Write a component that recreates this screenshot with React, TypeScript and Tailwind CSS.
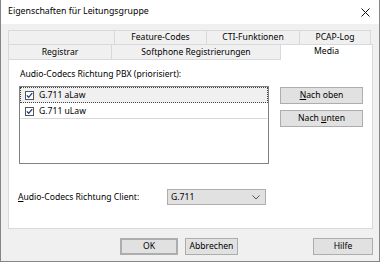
import React from "react";

const font = { fontFamily: '"Segoe UI", "Noto Sans", sans-serif' };

const topTabs = [
  { label: "", w: "w-[106px]" },
  { label: "Feature-Codes", w: "w-[92px]" },
  { label: "CTI-Funktionen", w: "w-[93px]" },
  { label: "PCAP-Log", w: "w-[72px]" },
];

const codecs = ["G.711 aLaw", "G.711 uLaw"];

const Check = () => (
  <span className="flex items-center justify-center w-[9px] h-[9px] border border-[#555] bg-white">
    <svg width="7" height="7" viewBox="0 0 7 7">
      <path d="M0.8 3.4 L2.7 5.3 L6.2 1.2" fill="none" stroke="#1a3a8a" strokeWidth="1.3" />
    </svg>
  </span>
);

const Btn = ({ children, className = "" }: { children: React.ReactNode; className?: string }) => (
  <button className={`h-[17px] flex items-center justify-center bg-[#e1e1e1] border border-[#adadad] text-[8.6px] leading-none text-black ${className}`}>
    {children}
  </button>
);

export default function App() {
  return (
    <div className="w-[380px] h-[262px] bg-[#f0f0f0] border-x border-b border-[#858585] text-black text-[8.6px] overflow-hidden" style={font}>
      {/* title bar */}
      <div className="h-[24px] bg-white flex items-center justify-between pl-[7px] pr-[9px]">
        <span className="text-[8.8px]">Eigenschaften für Leitungsgruppe</span>
        <svg width="9" height="9" viewBox="0 0 9 9">
          <path d="M0.5 0.5 L8.5 8.5 M8.5 0.5 L0.5 8.5" stroke="#111" strokeWidth="1" />
        </svg>
      </div>

      {/* tabs */}
      <div className="ml-[7px] mt-[6px] w-[365px]">
        <div className="flex h-[14px]">
          {topTabs.map((t, i) => (
            <div
              key={i}
              className={`${t.w} h-[14px] flex items-center justify-center border-t border-l border-[#d9d9d9] ${i === topTabs.length - 1 ? "border-r" : ""} leading-none`}
            >
              {t.label}
            </div>
          ))}
        </div>
        <div className="flex h-[15px] items-end">
          <div className="w-[103px] h-[15px] flex items-center justify-center border-t border-l border-[#d9d9d9] leading-none">
            Registrar
          </div>
          <div className="w-[169px] h-[15px] flex items-center justify-center border-t border-l border-[#d9d9d9] leading-none">
            Softphone Registrierungen
          </div>
          <div className="w-[93px] h-[16px] -mt-[1px] flex items-start pt-[2px] justify-center bg-white border-t border-x border-[#d9d9d9] leading-none relative z-10 -mb-[1px]">
            Media
          </div>
        </div>

        {/* panel */}
        <div className="h-[170px] bg-white border border-[#d9d9d9] pl-[10px] pt-[7px]">
          <div className="h-[14px] flex items-center pl-[1px]">Audio-Codecs Richtung PBX (priorisiert):</div>
          <div className="flex mt-[5px]">
            <div className="w-[250px] h-[78px] border border-[#828282] bg-white">
              {codecs.map((c, i) => (
                <div
                  key={c}
                  className={`h-[16px] flex items-center gap-[5px] pl-[4px] border ${
                    i === 0 ? "bg-[#f0f0f0] border-dotted border-[#444]" : "border-transparent border-b-[#d8d8d8]"
                  }`}
                >
                  <Check />
                  <span>{c}</span>
                </div>
              ))}
            </div>
            <div className="ml-[11px] mt-[1px] w-[83px] flex flex-col gap-[6px]">
              <Btn className="w-[83px]">
                <span>
                  <span className="underline">N</span>ach oben
                </span>
              </Btn>
              <Btn className="w-[83px]">
                <span>
                  Nach <span className="underline">u</span>nten
                </span>
              </Btn>
            </div>
          </div>

          <div className="flex items-center mt-[25px] -ml-[1px]">
            <div className="w-[149px]">
              <span className="underline">A</span>udio-Codecs Richtung Client:
            </div>
            <div className="w-[99px] h-[16px] flex items-center justify-between bg-[#e1e1e1] border border-[#adadad] pl-[3px] pr-[5px]">
              <span>G.711</span>
              <svg width="8" height="5" viewBox="0 0 8 5">
                <path d="M0.5 0.5 L4 4 L7.5 0.5" fill="none" stroke="#555" strokeWidth="1" />
              </svg>
            </div>
          </div>
        </div>
      </div>

      {/* footer */}
      <div className="flex mt-[9px] pl-[119px]">
        <Btn className="w-[58px] border-[#0078d7] border-2">OK</Btn>
        <Btn className="w-[53px] ml-[7px]">Abbrechen</Btn>
        <Btn className="w-[60px] ml-[75px]">Hilfe</Btn>
      </div>
    </div>
  );
}
